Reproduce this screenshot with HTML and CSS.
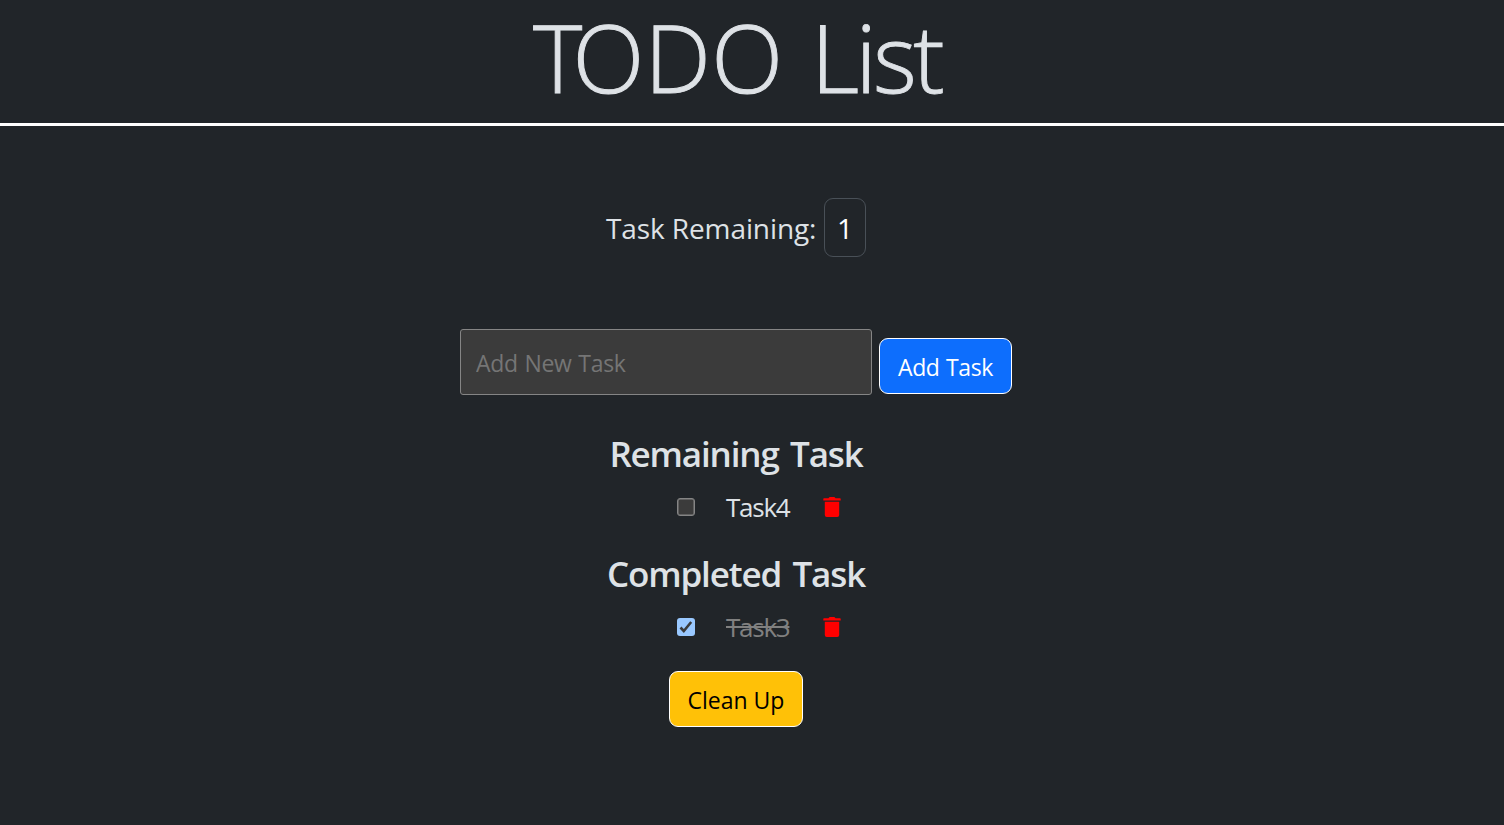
FILE: index.html
```html
<!DOCTYPE html>
<html lang="en">
<head>
<meta charset="utf-8">
<title>TODO List</title>
<link rel="stylesheet" href="styles.css">
</head>
<body>
<header class="header"><h1 class="title"><span class="title-initial">T</span>ODO <span class="title-word">List</span></h1></header>
<main class="main">
  <div class="counter"><span class="counter-label">Task Remaining:</span><span class="counter-value">1</span></div>
  <form class="add-form">
    <input class="task-input" type="text" placeholder="Add New Task">
    <button class="btn btn-primary" type="button">Add Task</button>
  </form>
  <h2 class="heading heading-remaining">Remaining Task</h2>
  <div class="task">
    <span class="checkbox"></span>
    <span class="task-name">Task4</span>
    <svg class="trash" viewBox="0 0 18 20"><path d="M1 1.300h4.500Q6 0 7.200 0h3.600q1.200 0 1.700 1.300H17q.7 0 .7.7v1.600H.3V2q0-.7.7-.7zM1.800 4.800h14.400V18q0 2-2 2H3.800q-2 0-2-2z"/></svg>
  </div>
  <h2 class="heading heading-completed">Completed Task</h2>
  <div class="task">
    <span class="checkbox checked"><svg class="check" viewBox="0 0 18 18"><path d="M3.500 9.500l3.300 3.500L14.200 4"/></svg></span>
    <span class="task-name done">Task3</span>
    <svg class="trash" viewBox="0 0 18 20"><path d="M1 1.300h4.500Q6 0 7.200 0h3.600q1.200 0 1.700 1.300H17q.7 0 .7.7v1.600H.3V2q0-.7.7-.7zM1.800 4.800h14.400V18q0 2-2 2H3.800q-2 0-2-2z"/></svg>
  </div>
  <button class="btn btn-warning" type="button">Clean Up</button>
</main>
</body>
</html>
```
FILE: styles.css
```css
* { box-sizing: border-box; }
body {
  margin: 0;
  min-height: 825px;
  background: #212529;
  color: #dee2e6;
  font-family: "Open Sans", "Noto Sans", sans-serif;
}
.header {
  height: 126px;
  padding-right: 30px;
  border-bottom: 3px solid #fff;
  text-align: center;
}
.title {
  margin: 0;
  font-size: 94px;
  font-weight: 300;
  line-height: 114px;
  letter-spacing: 0.3px;
  word-spacing: 3px;
  white-space: nowrap;
  -webkit-text-stroke: 0.9px #dee2e6;
}
.title-initial { letter-spacing: -10px; }
.title-word { letter-spacing: -3.7px; }
.main {
  display: flex;
  flex-direction: column;
  align-items: center;
  padding: 72px 32px 0 0;
}
.counter {
  display: flex;
  width: 260px;
  height: 59px;
  justify-content: space-between;
  font-size: 28px;
  line-height: 60px;
  white-space: nowrap;
}
.counter-label { letter-spacing: -0.1px; }
.counter-value {
  width: 42px;
  border: 1px solid #495057;
  border-radius: 9px;
  color: #fff;
  line-height: 58px;
  text-align: center;
}
.add-form {
  display: flex;
  width: 552px;
  height: 66px;
  margin: 72px 0 0;
  justify-content: space-between;
}
.task-input {
  width: 412px;
  height: 66px;
  padding: 2px 15px 0;
  border: 1px solid #858585;
  border-radius: 3px;
  background: #3b3b3b;
  color: #fff;
  font: 23px "Open Sans", "Noto Sans", sans-serif;
  letter-spacing: -0.3px;
  word-spacing: 1px;
}
.task-input::placeholder { color: #757575; opacity: 1; }
.btn {
  width: 133px;
  height: 56px;
  padding: 2px 0 0;
  border: 1px solid #fff;
  border-radius: 9px;
  font: 23px "Open Sans", "Noto Sans", sans-serif;
  white-space: nowrap;
}
.btn-primary { margin-top: 9px; background: #0d6efd; color: #fff; letter-spacing: -0.4px; word-spacing: 1px; }
.btn-warning { width: 134px; margin-top: 28px; background: #ffc107; color: #000; }
.heading {
  height: 43px;
  margin: 37px 0 0;
  font-size: 35px;
  font-weight: 600;
  line-height: 43px;
  letter-spacing: -1.15px;
  word-spacing: 3.5px;
  white-space: nowrap;
}
.heading-completed { margin-top: 29px; }
.task {
  display: flex;
  width: 166px;
  height: 33px;
  margin: 15px 0 0 48px;
  align-items: center;
}
.checkbox {
  width: 18px;
  height: 18px;
  border: 1px solid #858585;
  border-radius: 3px;
  background: #3b3b3b;
  box-shadow: inset 0 0 0 0.5px #858585;
}
.checked { border: 0; background: #99c8ff; box-shadow: none; }
.check { display: block; width: 18px; height: 18px; }
.check path { fill: none; stroke: #3b3b3b; stroke-width: 2.6; }
.task-name {
  width: 64px;
  margin: 1px 33px 0 31px;
  font-size: 26px;
  line-height: 33px;
  letter-spacing: -1.25px;
  white-space: nowrap;
}
.done { color: #808080; text-decoration: line-through; }
.trash { flex: none; width: 18px; height: 20px; fill: #f00; }
```
